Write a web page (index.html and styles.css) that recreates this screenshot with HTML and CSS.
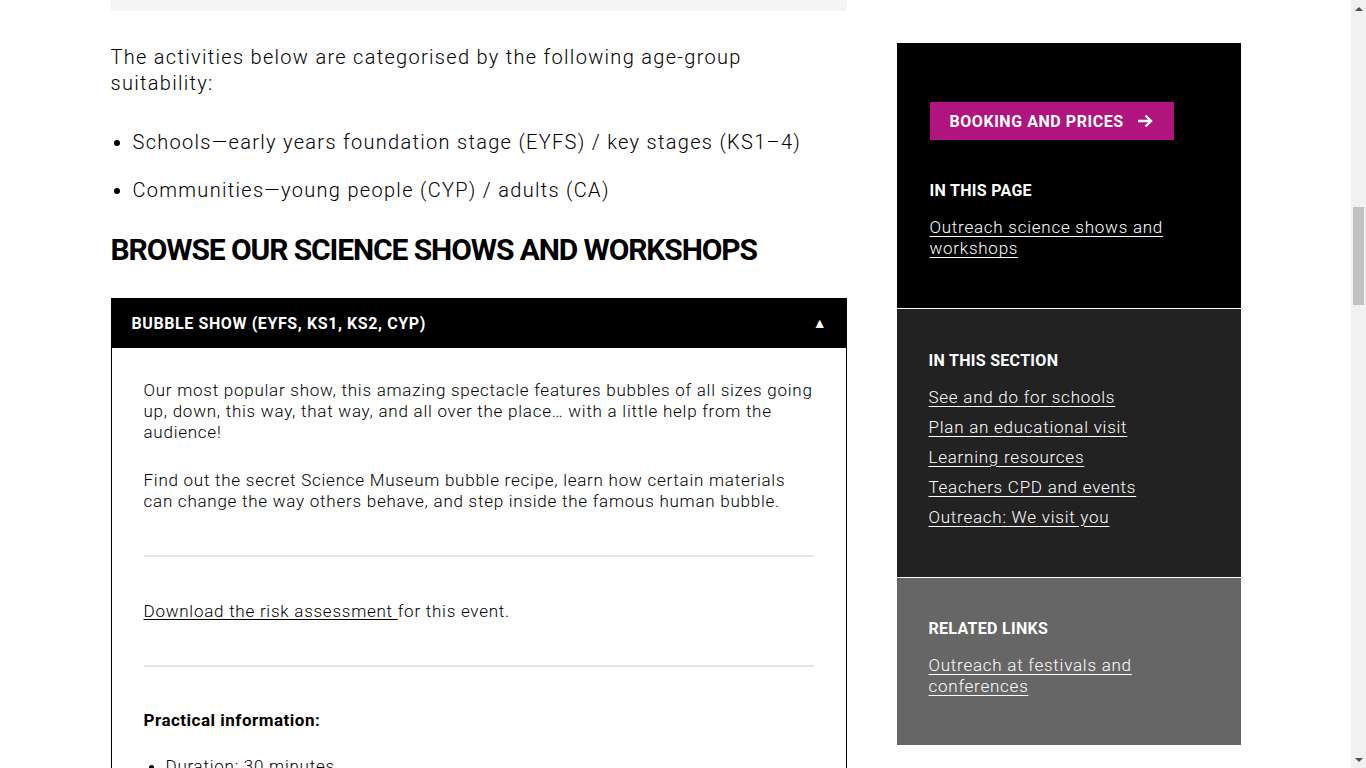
FILE: index.html
```html
<!DOCTYPE html>
<html lang="en">
<head>
<meta charset="utf-8">
<title>Outreach science shows and workshops</title>
<link rel="stylesheet" href="styles.css">
</head>
<body>
<div class="viewport">
  <div class="page">
    <div class="container">
      <main class="main">
        <div class="intro-end"></div>
        <p class="lead">The activities below are categorised by the following age-group suitability:</p>
        <ul class="age-list">
          <li>Schools—early years foundation stage (EYFS) / key stages (KS1–4)</li>
          <li>Communities—young people (CYP) / adults (CA)</li>
        </ul>
        <h2 class="section-title">BROWSE OUR SCIENCE SHOWS AND WORKSHOPS</h2>
        <section class="accordion">
          <div class="acc-head">
            <span class="acc-title">BUBBLE SHOW (EYFS, KS1, KS2, CYP)</span>
            <span class="acc-toggle">▲</span>
          </div>
          <div class="acc-body">
            <p class="acc-p">Our most popular show, this amazing spectacle features bubbles of all sizes going up, down, this way, that way, and all over the place… with a little help from the audience!</p>
            <p class="acc-p">Find out the secret Science Museum bubble recipe, learn how certain materials can change the way others behave, and step inside the famous human bubble.</p>
            <hr class="rule">
            <p class="acc-p risk"><a href="#" class="risk-link">Download the risk assessment </a>for this event.</p>
            <hr class="rule rule-last">
            <p class="acc-p practical">Practical information:</p>
            <ul class="info-list">
              <li>Duration: 30 minutes</li>
            </ul>
          </div>
        </section>
      </main>
      <aside class="sidebar">
        <div class="side-block block-black">
          <a href="#" class="btn-booking">BOOKING AND PRICES
            <svg class="arrow" width="16" height="14" viewBox="0 0 16 14"><path d="M1 7h13M8.5 1.5L14 7l-5.5 5.5" fill="none" stroke="#fff" stroke-width="2.4"/></svg>
          </a>
          <h3 class="side-title">IN THIS PAGE</h3>
          <a href="#" class="side-link">Outreach science shows and workshops</a>
        </div>
        <div class="side-block block-dark">
          <h3 class="side-title">IN THIS SECTION</h3>
          <ul class="side-list">
            <li><a href="#" class="side-link">See and do for schools</a></li>
            <li><a href="#" class="side-link">Plan an educational visit</a></li>
            <li><a href="#" class="side-link">Learning resources</a></li>
            <li><a href="#" class="side-link">Teachers CPD and events</a></li>
            <li><a href="#" class="side-link">Outreach: We visit you</a></li>
          </ul>
        </div>
        <div class="side-block block-grey">
          <h3 class="side-title">RELATED LINKS</h3>
          <a href="#" class="side-link">Outreach at festivals and conferences</a>
        </div>
      </aside>
    </div>
  </div>
  <div class="scrollbar">
    <div class="sb-arrow sb-up"></div>
    <div class="sb-track"><div class="sb-thumb"></div></div>
    <div class="sb-arrow sb-down"></div>
  </div>
</div>
</body>
</html>
```
FILE: styles.css
```css
* { box-sizing: border-box; }
html, body { margin: 0; padding: 0; height: 100%; overflow: hidden; background: #fff; }
body { font-family: Roboto, "Liberation Sans", sans-serif; color: #000; }

.viewport { display: flex; height: 768px; overflow: hidden; }
.page { flex: 1; overflow: hidden; }
.container { width: 1130px; margin: 0 auto; display: flex; gap: 50px; align-items: flex-start; }

.main { width: 736px; flex: none; }
.intro-end { height: 11px; background: #f5f5f5; }

.lead { margin: 33px 0 0; font-size: 20px; line-height: 26px; font-weight: 300; letter-spacing: 1.3px; }
.age-list { margin: 33px 0 0; padding: 0 0 0 22px; font-size: 20px; line-height: 26px; font-weight: 300; letter-spacing: 1.3px; }
.age-list li { margin-bottom: 22px; }
.age-list li:last-child { margin-bottom: 0; }

.section-title { margin: 29px 0 30px; font-size: 30px; line-height: 36px; font-weight: 700; letter-spacing: -1.1px; }

.accordion { border: 1px solid #000; border-top: none; }
.acc-head { height: 50px; background: #000; color: #fff; display: flex; align-items: center; justify-content: space-between; padding: 0 20px 0 21px; margin: 0 -1px; }
.acc-title { font-size: 16px; font-weight: 700; letter-spacing: 0.6px; }
.acc-toggle { font-size: 14px; }

.acc-body { padding: 32px 32px 0 32px; }
.acc-p { margin: 0 0 27px; font-size: 17px; line-height: 21px; font-weight: 300; letter-spacing: 0.75px; }
.rule { border: none; height: 2px; background: #e6e6e6; margin: 43px 0 44px; }
.rule-last { margin-bottom: 43px; }
.acc-p.risk { margin-bottom: 0; }
.risk-link { color: #000; text-underline-offset: 2px; }
.acc-p.practical { font-weight: 700; margin-top: 42px; margin-bottom: 25px; letter-spacing: 0.5px; }
.info-list { margin: 0; padding-left: 22px; font-size: 17px; line-height: 21px; font-weight: 300; letter-spacing: 0.75px; }

.sidebar { width: 344px; flex: none; margin-top: 43px; }
.side-block { padding: 41px 32px 48px; color: #fff; }
.block-black { background: #000; padding-top: 59px; padding-bottom: 49px; padding-left: 33px; border-bottom: 1px solid #fff; }
.block-dark { background: #222; border-bottom: 1px solid #fff; padding-top: 42px; padding-bottom: 49px; }
.block-grey { background: #666; }

.btn-booking { display: inline-flex; align-items: center; gap: 13px; height: 38px; width: 244px; padding: 0 20px; background: #b0147e; color: #fff; text-decoration: none; font-size: 16px; font-weight: 700; letter-spacing: 0.55px; margin-bottom: 41px; }
.side-title { margin: 0 0 16px; font-size: 16px; line-height: 20px; font-weight: 700; letter-spacing: 0.3px; }
.side-link { color: #fff; font-size: 17px; line-height: 21px; font-weight: 300; letter-spacing: 0.75px; text-decoration: underline; text-underline-offset: 3px; }
.block-black .side-link, .block-grey .side-link { display: block; width: 240px; }
.side-list { list-style: none; margin: 0; padding: 0; }
.side-list li { line-height: 21px; margin-bottom: 9px; }
.side-list li:last-child { margin-bottom: 0; }

.scrollbar { width: 15px; flex: none; background: #f1f1f1; display: flex; flex-direction: column; }
.sb-arrow { height: 17px; display: flex; align-items: center; justify-content: center; }
.sb-up::before { content: ""; border-left: 4px solid transparent; border-right: 4px solid transparent; border-bottom: 4px solid #505050; }
.sb-down::before { content: ""; border-left: 4px solid transparent; border-right: 4px solid transparent; border-top: 4px solid #505050; }
.sb-track { flex: 1; padding: 190px 2px 0; }
.sb-thumb { height: 98px; background: #c1c1c1; }
```
